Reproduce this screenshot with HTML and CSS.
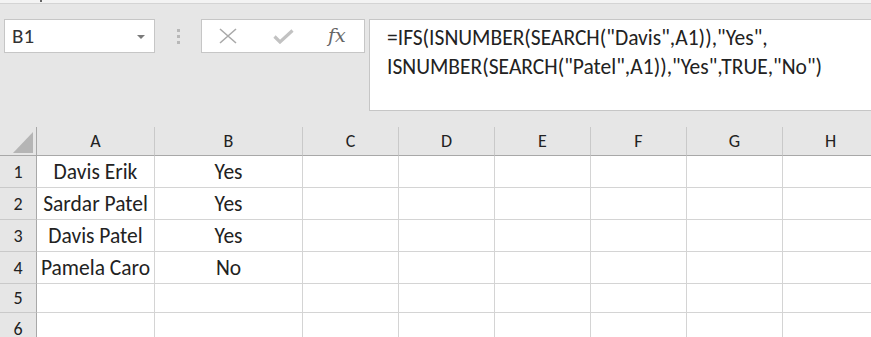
FILE: index.html
```html
<!DOCTYPE html>
<html lang="en">
<head>
  <meta charset="UTF-8">
  <title>IFS formula</title>
  <link rel="stylesheet" href="styles.css">
</head>
<body>

  <div class="top-strip"><span class="tick"></span></div>

  <!-- formula bar -->
  <div class="formula-bar">
    <div class="name-box">
      <span>B1</span>
      <span class="drop"></span>
    </div>
    <div class="grip">
      <span></span><span></span><span></span>
    </div>
    <div class="fx-box">
      <svg class="icon-x" width="18" height="16" viewBox="0 0 18 16">
        <path d="M1 1 L17 15 M17 1 L1 15" stroke="#a9a9a9" stroke-width="1.6" fill="none"/>
      </svg>
      <svg class="icon-check" width="21" height="15" viewBox="0 0 21 15">
        <path d="M1.5 7.5 L7 13 L19.5 1.5" stroke="#c2c2c2" stroke-width="3.2" fill="none"/>
      </svg>
      <span class="fx">fx</span>
    </div>
    <div class="formula">=IFS(ISNUMBER(SEARCH("Davis",A1)),"Yes",<br>ISNUMBER(SEARCH("Patel",A1)),"Yes",TRUE,"No")</div>
  </div>

  <!-- sheet -->
  <div class="sheet">
    <div class="hd corner"><span class="tri"></span></div>
    <div class="hd">A</div>
    <div class="hd">B</div>
    <div class="hd">C</div>
    <div class="hd">D</div>
    <div class="hd">E</div>
    <div class="hd">F</div>
    <div class="hd">G</div>
    <div class="hd">H</div>

    <div class="rh">1</div>
    <div class="cell">Davis Erik</div>
    <div class="cell">Yes</div>
    <div class="cell"></div><div class="cell"></div><div class="cell"></div><div class="cell"></div><div class="cell"></div><div class="cell"></div>

    <div class="rh">2</div>
    <div class="cell">Sardar Patel</div>
    <div class="cell">Yes</div>
    <div class="cell"></div><div class="cell"></div><div class="cell"></div><div class="cell"></div><div class="cell"></div><div class="cell"></div>

    <div class="rh">3</div>
    <div class="cell">Davis Patel</div>
    <div class="cell">Yes</div>
    <div class="cell"></div><div class="cell"></div><div class="cell"></div><div class="cell"></div><div class="cell"></div><div class="cell"></div>

    <div class="rh">4</div>
    <div class="cell">Pamela Caro</div>
    <div class="cell">No</div>
    <div class="cell"></div><div class="cell"></div><div class="cell"></div><div class="cell"></div><div class="cell"></div><div class="cell"></div>

    <div class="rh">5</div>
    <div class="cell"></div><div class="cell"></div><div class="cell"></div><div class="cell"></div><div class="cell"></div><div class="cell"></div><div class="cell"></div><div class="cell"></div>

    <div class="rh">6</div>
    <div class="cell"></div><div class="cell"></div><div class="cell"></div><div class="cell"></div><div class="cell"></div><div class="cell"></div><div class="cell"></div><div class="cell"></div>
  </div>

</body>
</html>
```

FILE: styles.css
```css
body {
  margin: 0;
  background-color: #e6e6e6;
  font-family: Carlito, Lato, "Open Sans", sans-serif;
  color: #222;
  overflow: hidden;
  width: 871px;
  height: 337px;
}

.top-strip {
  height: 3px;
  background-color: #f3f3f3;
  border-bottom: 1px solid #d4d4d4;
  position: relative;
}

.top-strip .tick {
  position: absolute;
  left: 40px;
  top: 0;
  width: 2px;
  height: 2px;
  background-color: #666;
}

.formula-bar {
  display: flex;
  align-items: flex-start;
  padding: 15px 0 0 4px;
}

.name-box {
  box-sizing: border-box;
  width: 151px;
  height: 34px;
  background-color: white;
  border: 1px solid #c6c6c6;
  display: flex;
  align-items: center;
  justify-content: space-between;
  padding: 0 9px 0 7px;
  font-size: 21px;
  color: #333;
}

.drop {
  width: 0;
  height: 0;
  border-left: 4px solid transparent;
  border-right: 4px solid transparent;
  border-top: 4px solid #7a7a7a;
  margin-top: 2px;
}

.grip {
  width: 46px;
  height: 34px;
  display: flex;
  flex-direction: column;
  align-items: center;
  justify-content: center;
  gap: 3px;
}

.grip span {
  width: 3px;
  height: 3px;
  background-color: #b8b8b8;
}

.fx-box {
  box-sizing: border-box;
  width: 164px;
  height: 34px;
  background-color: white;
  border: 1px solid #c6c6c6;
  display: flex;
  align-items: center;
  padding-left: 17px;
}

.icon-check {
  margin-left: 36px;
}

.fx {
  margin-left: 34px;
  font-family: "DejaVu Serif", "Liberation Serif", serif;
  font-style: italic;
  font-size: 19px;
  color: #666;
  margin-top: -3px;
}

.formula {
  box-sizing: border-box;
  flex: 1;
  margin-left: 4px;
  height: 92px;
  background-color: white;
  border: 1px solid #c6c6c6;
  border-right: none;
  padding: 4px 0 0 17px;
  font-size: 21.5px;
  line-height: 29px;
  white-space: nowrap;
  color: #222;
}

.sheet {
  margin-top: 16px;
  display: grid;
  grid-template-columns: 37px 118px 148px repeat(6, 96px);
  grid-template-rows: 29px repeat(4, 32px) 29px 32px;
  font-size: 21.5px;
}

.sheet > div {
  box-sizing: border-box;
  display: flex;
  align-items: center;
  justify-content: center;
}

.hd {
  background-color: #e6e6e6;
  border-right: 1px solid #c9c9c9;
  border-bottom: 1px solid #a8a8a8;
  font-size: 18px;
}

.corner {
  border-right-color: #a8a8a8;
}

.sheet > .corner {
  align-items: flex-end;
  justify-content: flex-end;
  padding: 0 3px 2px 0;
}

.tri {
  width: 20px;
  height: 21px;
  background-color: #b5b5b5;
  clip-path: polygon(100% 0, 100% 100%, 0 100%);
}

.rh {
  background-color: #e6e6e6;
  border-right: 1px solid #a8a8a8;
  border-bottom: 1px solid #c9c9c9;
  font-size: 18px;
}

.cell {
  background-color: white;
  border-right: 1px solid #d4d4d4;
  border-bottom: 1px solid #d4d4d4;
}
```
